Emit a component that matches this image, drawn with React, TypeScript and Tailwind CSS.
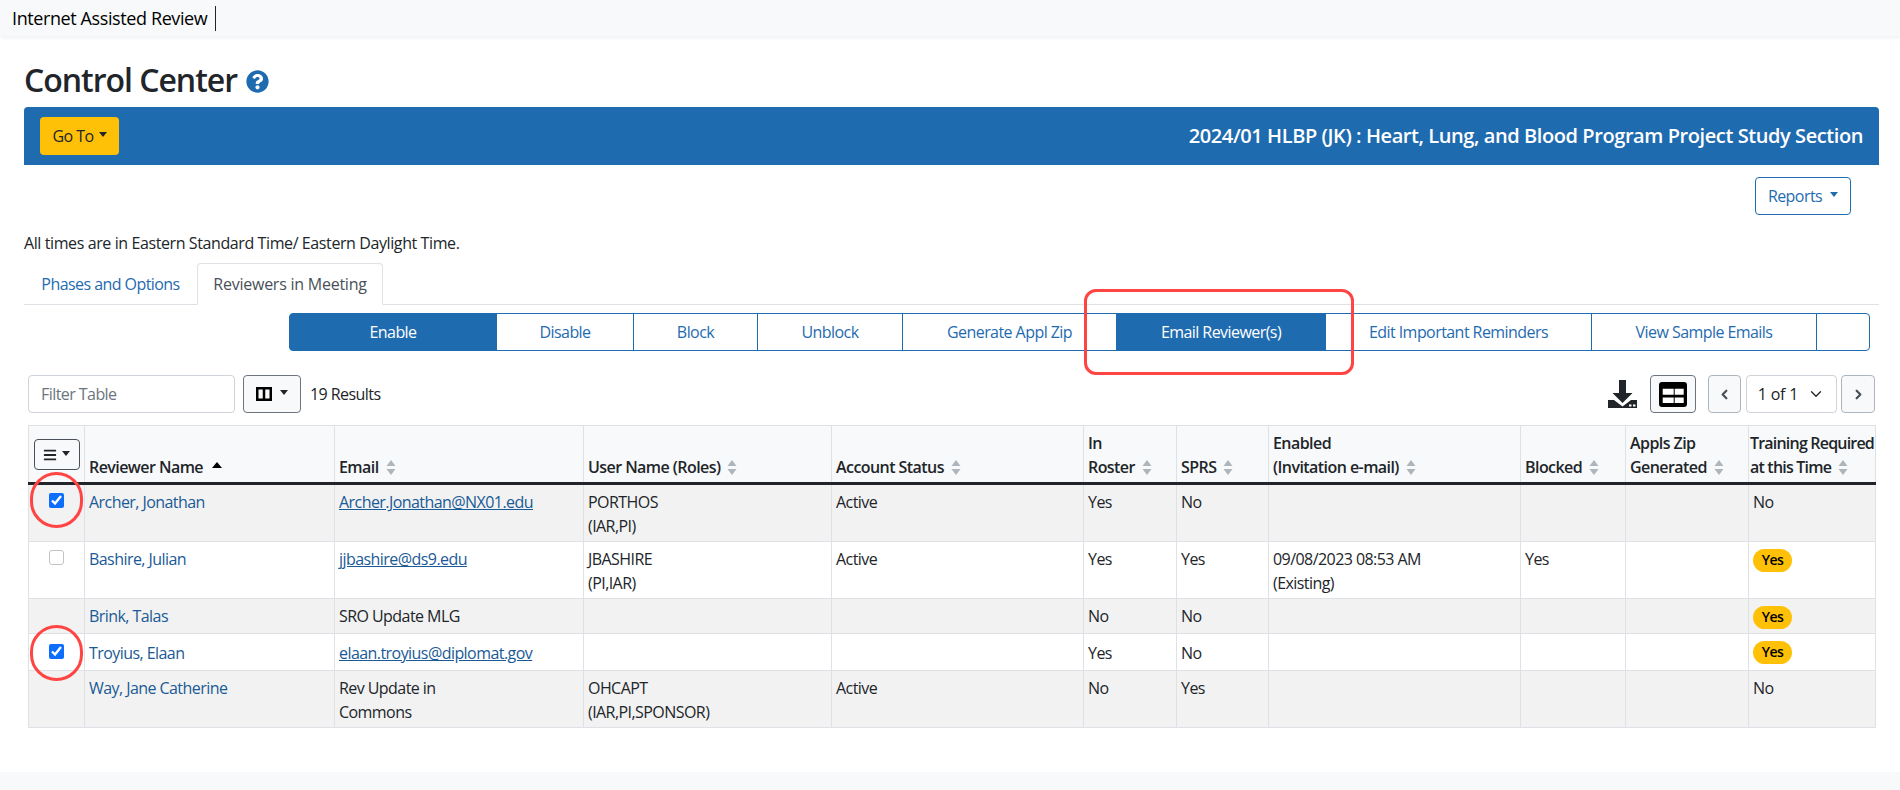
import { FaBars, FaQuestionCircle } from "react-icons/fa"
import { ChevronDown, ChevronLeft, ChevronRight } from "lucide-react"

const actions = [
  { label: "Enable", width: "w-[208px]", active: true, extra: "rounded-l-[4px]" },
  { label: "Disable", width: "w-[138px]" },
  { label: "Block", width: "w-[125px]" },
  { label: "Unblock", width: "w-[146px]" },
  { label: "Generate Appl Zip", width: "w-[215px]" },
  { label: "Email Reviewer(s)", width: "w-[210px]", active: true },
  { label: "Edit Important Reminders", width: "w-[267px]" },
  { label: "View Sample Emails", width: "w-[226px]" },
  { label: "", width: "w-[54px]", extra: "rounded-r-[4px]" },
]

const rows = [
  { id: "archer", h: "h-[58px]", pt: "pt-[5px]", checked: true, name: "Archer, Jonathan", email: "Archer.Jonathan@NX01.edu", link: true, user: ["PORTHOS", "(IAR,PI)"], status: "Active", roster: "Yes", sprs: "No", enabled: [], blocked: "", training: "No" },
  { id: "bashire", h: "h-[57px]", pt: "pt-[5px]", checked: false, name: "Bashire, Julian", email: "jjbashire@ds9.edu", link: true, user: ["JBASHIRE", "(PI,IAR)"], status: "Active", roster: "Yes", sprs: "Yes", enabled: ["09/08/2023 08:53 AM", "(Existing)"], blocked: "Yes", training: "Yes" },
  { id: "brink", h: "h-[35px]", pt: "pt-[5px]", name: "Brink, Talas", email: "SRO Update MLG", link: false, user: [], status: "", roster: "No", sprs: "No", enabled: [], blocked: "", training: "Yes" },
  { id: "troyius", h: "h-[37px]", pt: "pt-[7px]", checked: true, name: "Troyius, Elaan", email: "elaan.troyius@diplomat.gov", link: true, user: [], status: "", roster: "Yes", sprs: "No", enabled: [], blocked: "", training: "Yes" },
  { id: "way", h: "h-[57px]", pt: "pt-[5px]", name: "Way, Jane Catherine", email: "Rev Update in Commons", link: false, user: ["OHCAPT", "(IAR,PI,SPONSOR)"], status: "Active", roster: "No", sprs: "Yes", enabled: [], blocked: "", training: "No" },
]

function Caret() {
  return <span className="-mt-[3px] inline-block border-x-[4px] border-t-[5px] border-x-transparent border-t-current" />
}

function SortIcon() {
  return (
    <svg width="10" height="15" viewBox="0 0 10 15" className="ml-[7px] inline-block align-[-2px]">
      <path d="M5 0l4.500 6h-9z M5 15L.5 9h9z" fill="#adb5bd" />
    </svg>
  )
}

function HeaderCell({ lines, sort = true, className = "" }: { lines: string[]; sort?: boolean; className?: string }) {
  return (
    <th className={`border border-[#dee2e6] border-b-[3px] border-b-[#212529] bg-[#f8f9fa] pb-[3px] pl-[4px] text-left align-bottom font-semibold leading-[24px] whitespace-nowrap ${className}`}>
      {lines.map((line, i) => (
        <div key={line}>
          {line}
          {sort && i === lines.length - 1 && <SortIcon />}
        </div>
      ))}
    </th>
  )
}

function YesBadge() {
  return (
    <span className="inline-flex h-[23px] w-[39px] items-center justify-center rounded-full bg-[#ffc107] text-[14px] font-semibold text-black">
      Yes
    </span>
  )
}

export default function App() {
  return (
    <div className="relative h-[790px] w-[1900px] overflow-hidden bg-white font-['Open_Sans','Noto_Sans',sans-serif] text-[16px] leading-[24px] tracking-[-0.035em] text-[#212529]">
      <header className="flex h-[36px] items-center bg-[#f8f9fa] pl-[12px] shadow-[0_2px_4px_rgba(0,0,0,0.06)]">
        <span className="text-[18px] tracking-[-0.022em] text-black">Internet Assisted Review</span>
        <span className="ml-[8px] h-[25px] w-px bg-[#212529]" />
      </header>

      <main className="pl-[24px] pr-[21px]">
        <div className="flex h-[71px] items-center pt-[19px] pb-[2px]">
          <h1 className="text-[32px] leading-[40px] font-semibold tracking-[-0.032em]">Control Center</h1>
          <FaQuestionCircle className="ml-[9px] mt-[3px] text-[23px] text-[#1f6bb0]" />
        </div>

        <div className="flex h-[58px] items-center justify-between rounded-t-[4px] bg-[#1f6bb0] pl-[16px] pr-[16px]">
          <button className="flex h-[38px] w-[79px] items-center justify-center gap-[5px] rounded-[4px] bg-[#ffc107] text-[16px] text-[#212529]">
            Go To <Caret />
          </button>
          <div className="text-[20px] font-semibold tracking-[-0.021em] text-white">
            2024/01 HLBP (JK) : Heart, Lung, and Blood Program Project Study Section
          </div>
        </div>

        <div className="mt-[12px] flex justify-end pr-[28px]">
          <button className="flex h-[38px] w-[96px] items-center justify-center gap-[8px] rounded-[4px] border border-[#1f6bb0] text-[#1f6bb0]">
            Reports <Caret />
          </button>
        </div>

        <p className="mt-[16px] tracking-[-0.025em]">All times are in Eastern Standard Time/ Eastern Daylight Time.</p>

        <nav className="mt-[8px] flex h-[42px] border-b border-[#dee2e6]">
          <a className="flex w-[173px] items-center justify-center text-[#1f6bb0]">Phases and Options</a>
          <a className="flex h-[42px] w-[186px] items-center justify-center rounded-t-[4px] border border-[#dee2e6] border-b-white tracking-[-0.015em] text-[#495057]">
            Reviewers in Meeting
          </a>
        </nav>

        <div className="ml-[265px] mt-[8px] flex h-[38px]">
          {actions.map((action) => (
            <button
              key={action.label || "more"}
              className={`-mr-px border border-[#1f6bb0] ${action.width} ${action.extra ?? ""} ${action.active ? "bg-[#1f6bb0] text-white" : "bg-white text-[#1f6bb0]"}`}
            >
              {action.label}
            </button>
          ))}
        </div>

        <div className="ml-[4px] mr-[4px] mt-[24px] flex h-[38px] items-center">
          <input
            placeholder="Filter Table"
            className="h-[38px] w-[207px] rounded-[4px] border border-[#ced4da] px-[12px] outline-none placeholder:text-[#6c757d]"
          />
          <button className="ml-[8px] flex h-[38px] w-[58px] items-center justify-center gap-[8px] rounded-[4px] border border-[#6c757d] bg-[#f8f9fa]">
            <svg width="16" height="14" viewBox="0 0 16 14">
              <path d="M1.250 1.250h13.500v11.500H1.250z M8 1.250v11.500" fill="none" stroke="#000" strokeWidth="2.5" />
            </svg>
            <Caret />
          </button>
          <span className="ml-[9px]">19 Results</span>

          <svg width="29" height="28" viewBox="0 0 29 28" className="ml-auto">
            <path d="M11 0h7v13h6.500l-10 10-10-10H11z" fill="#212529" />
            <path d="M0 20h6l8.500 6.500L23 20h6v8H0z" fill="#212529" />
            <path d="M21 24.500h2.500v2H21zM25 24.500h2.500v2H25z" fill="#fff" />
          </svg>
          <button className="ml-[13px] flex h-[38px] w-[46px] items-center justify-center rounded-[4px] border border-[#6c757d] bg-[#f8f9fa]">
            <svg width="28" height="25" viewBox="0 0 28 25">
              <rect width="28" height="25" rx="3" fill="#000" />
              <path d="M3.700 6.700h11v6h-11zM15.700 6.700h9v6h-9zM3.700 15.500h11v5.500h-11zM15.700 15.500h9v5.500h-9z" fill="#fff" />
            </svg>
          </button>
          <button className="ml-[12px] flex h-[38px] w-[33px] items-center justify-center rounded-[4px] border border-[#adb5bd] bg-[#f8f9fa] text-[#495057]">
            <ChevronLeft size={15} strokeWidth={3.5} />
          </button>
          <div className="ml-[5px] flex h-[38px] w-[91px] items-center justify-center gap-[9px] rounded-[4px] border border-[#ced4da] tracking-[-0.01em]">
            1 of 1 <ChevronDown size={18} strokeWidth={1.75} />
          </div>
          <button className="ml-[4px] flex h-[38px] w-[34px] items-center justify-center rounded-[4px] border border-[#adb5bd] bg-[#f8f9fa] text-[#495057]">
            <ChevronRight size={15} strokeWidth={3.5} />
          </button>
        </div>

        <table className="ml-[4px] mt-[12px] w-[1847px] table-fixed border-collapse">
          <colgroup>
            <col className="w-[56px]" />
            <col className="w-[250px]" />
            <col className="w-[249px]" />
            <col className="w-[248px]" />
            <col className="w-[252px]" />
            <col className="w-[93px]" />
            <col className="w-[92px]" />
            <col className="w-[252px]" />
            <col className="w-[105px]" />
            <col className="w-[123px]" />
            <col className="w-[127px]" />
          </colgroup>
          <thead>
            <tr className="h-[58px]">
              <th className="border border-[#dee2e6] border-b-[3px] border-b-[#212529] bg-[#f8f9fa] pb-[12px] align-bottom">
                <button className="mx-auto flex h-[31px] w-[46px] items-center justify-center gap-[5px] rounded-[4px] border border-[#495057] bg-[#f8f9fa]">
                  <FaBars className="text-[14px]" />
                  <Caret />
                </button>
              </th>
              <th className="border border-[#dee2e6] border-b-[3px] border-b-[#212529] bg-[#f8f9fa] pb-[3px] pl-[4px] text-left align-bottom font-semibold whitespace-nowrap">
                Reviewer Name
                <svg width="10" height="6" viewBox="0 0 10 6" className="ml-[9px] inline-block align-[5px]">
                  <path d="M5 0l5 6H0z" fill="#000" />
                </svg>
              </th>
              <HeaderCell lines={["Email"]} />
              <HeaderCell lines={["User Name (Roles)"]} />
              <HeaderCell lines={["Account Status"]} />
              <HeaderCell lines={["In", "Roster"]} />
              <HeaderCell lines={["SPRS"]} />
              <HeaderCell lines={["Enabled", "(Invitation e-mail)"]} />
              <HeaderCell lines={["Blocked"]} />
              <HeaderCell lines={["Appls Zip", "Generated"]} />
              <HeaderCell lines={["Training Required", "at this Time"]} className="!pl-[1px] tracking-[-0.05em]" />
            </tr>
          </thead>
          <tbody>
            {rows.map((row, i) => (
              <tr key={row.id} className={`${row.h} ${i % 2 === 0 ? "bg-[#f2f2f2]" : "bg-white"} [&>td]:border [&>td]:border-[#dee2e6] [&>td]:pl-[4px] [&>td]:align-top`}>
                <td className={`${row.pt} text-center !pl-0`}>
                  {row.checked === true && (
                    <input
                      type="checkbox"
                      checked
                      readOnly
                      className="mt-[3px] h-[15px] w-[15px] accent-[#0d6efd]"
                    />
                  )}
                  {row.checked === false && (
                    <input
                      type="checkbox"
                      readOnly
                      checked={false}
                      className="mt-[3px] h-[15px] w-[15px] appearance-none rounded-[3px] border border-[#c4c4c4] bg-white"
                    />
                  )}
                </td>
                <td className={`${row.pt} text-[#1a5a96]`}>{row.name}</td>
                <td className={row.pt}>
                  {row.link ? (
                    <a className="text-[#1a5a96] underline">{row.email}</a>
                  ) : (
                    <div className="max-w-[135px]">{row.email}</div>
                  )}
                </td>
                <td className={row.pt}>
                  {row.user.map((line) => (
                    <div key={line}>{line}</div>
                  ))}
                </td>
                <td className={row.pt}>{row.status}</td>
                <td className={row.pt}>{row.roster}</td>
                <td className={row.pt}>{row.sprs}</td>
                <td className={row.pt}>
                  {row.enabled.map((line) => (
                    <div key={line}>{line}</div>
                  ))}
                </td>
                <td className={row.pt}>{row.blocked}</td>
                <td className={row.pt}></td>
                <td className={row.training === "Yes" ? "pt-[5px]" : row.pt}>
                  {row.training === "Yes" ? <YesBadge /> : row.training}
                </td>
              </tr>
            ))}
          </tbody>
        </table>
      </main>

      <footer className="absolute bottom-0 left-0 h-[18px] w-full bg-[#f8f9fa]" />

      {/* red annotations drawn over the screenshot */}
      <div className="absolute left-[1084px] top-[289px] h-[86px] w-[270px] rounded-[12px] border-[3px] border-[#ff4444]" />
      <div className="absolute left-[30px] top-[472px] h-[56px] w-[53px] rounded-full border-[3px] border-[#ff4444]" />
      <div className="absolute left-[30px] top-[625px] h-[56px] w-[53px] rounded-full border-[3px] border-[#ff4444]" />
    </div>
  )
}
